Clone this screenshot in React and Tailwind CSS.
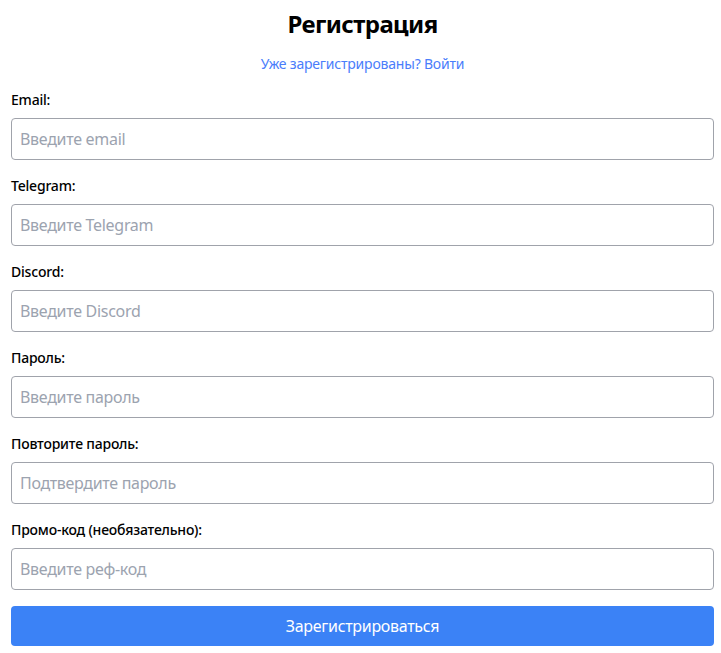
import React, { useState } from "react";

const fields = [
  { name: "email", label: "Email:", placeholder: "Введите email", type: "email" },
  { name: "telegram", label: "Telegram:", placeholder: "Введите Telegram", type: "text" },
  { name: "discord", label: "Discord:", placeholder: "Введите Discord", type: "text" },
  { name: "password", label: "Пароль:", placeholder: "Введите пароль", type: "password" },
  { name: "confirm", label: "Повторите пароль:", placeholder: "Подтвердите пароль", type: "password" },
  { name: "promo", label: "Промо-код (необязательно):", placeholder: "Введите реф-код", type: "text" },
];

const App = () => {
  const [form, setForm] = useState({});

  const handleChange = (e) => {
    setForm((prev) => ({ ...prev, [e.target.name]: e.target.value }));
  };

  return (
    <div className="min-h-screen bg-white font-['Noto_Sans',sans-serif] text-black">
      <div className="ml-[11px] mr-[7px] pt-2">
        {/* Header */}
        <h2 className="text-center text-2xl leading-8 font-bold tracking-[-0.6px]">Регистрация</h2>
        <p className="mt-[14px] text-center text-sm leading-5 tracking-[-0.2px]">
          <a href="#" className="text-[#4a7dfb]">
            Уже зарегистрированы? Войти
          </a>
        </p>

        {/* Form */}
        <form className="mt-4 flex flex-col" onSubmit={(e) => e.preventDefault()}>
          {fields.map((f) => (
            <div key={f.name} className="mb-4 flex flex-col">
              <label className="text-sm leading-5 font-medium tracking-[-0.2px]">{f.label}</label>
              <input
                type={f.type}
                name={f.name}
                value={form[f.name] || ""}
                onChange={handleChange}
                placeholder={f.placeholder}
                className="mt-2 h-[42px] w-full rounded border border-[#a0a3ab] px-2 text-base tracking-[-0.3px] text-black placeholder:text-[#9ca3af] focus:outline-none"
              />
            </div>
          ))}
          <button
            type="submit"
            className="h-10 w-full rounded bg-[#3b82f6] text-base tracking-[-0.3px] text-white"
          >
            Зарегистрироваться
          </button>
        </form>
      </div>
    </div>
  );
};

export default App;
